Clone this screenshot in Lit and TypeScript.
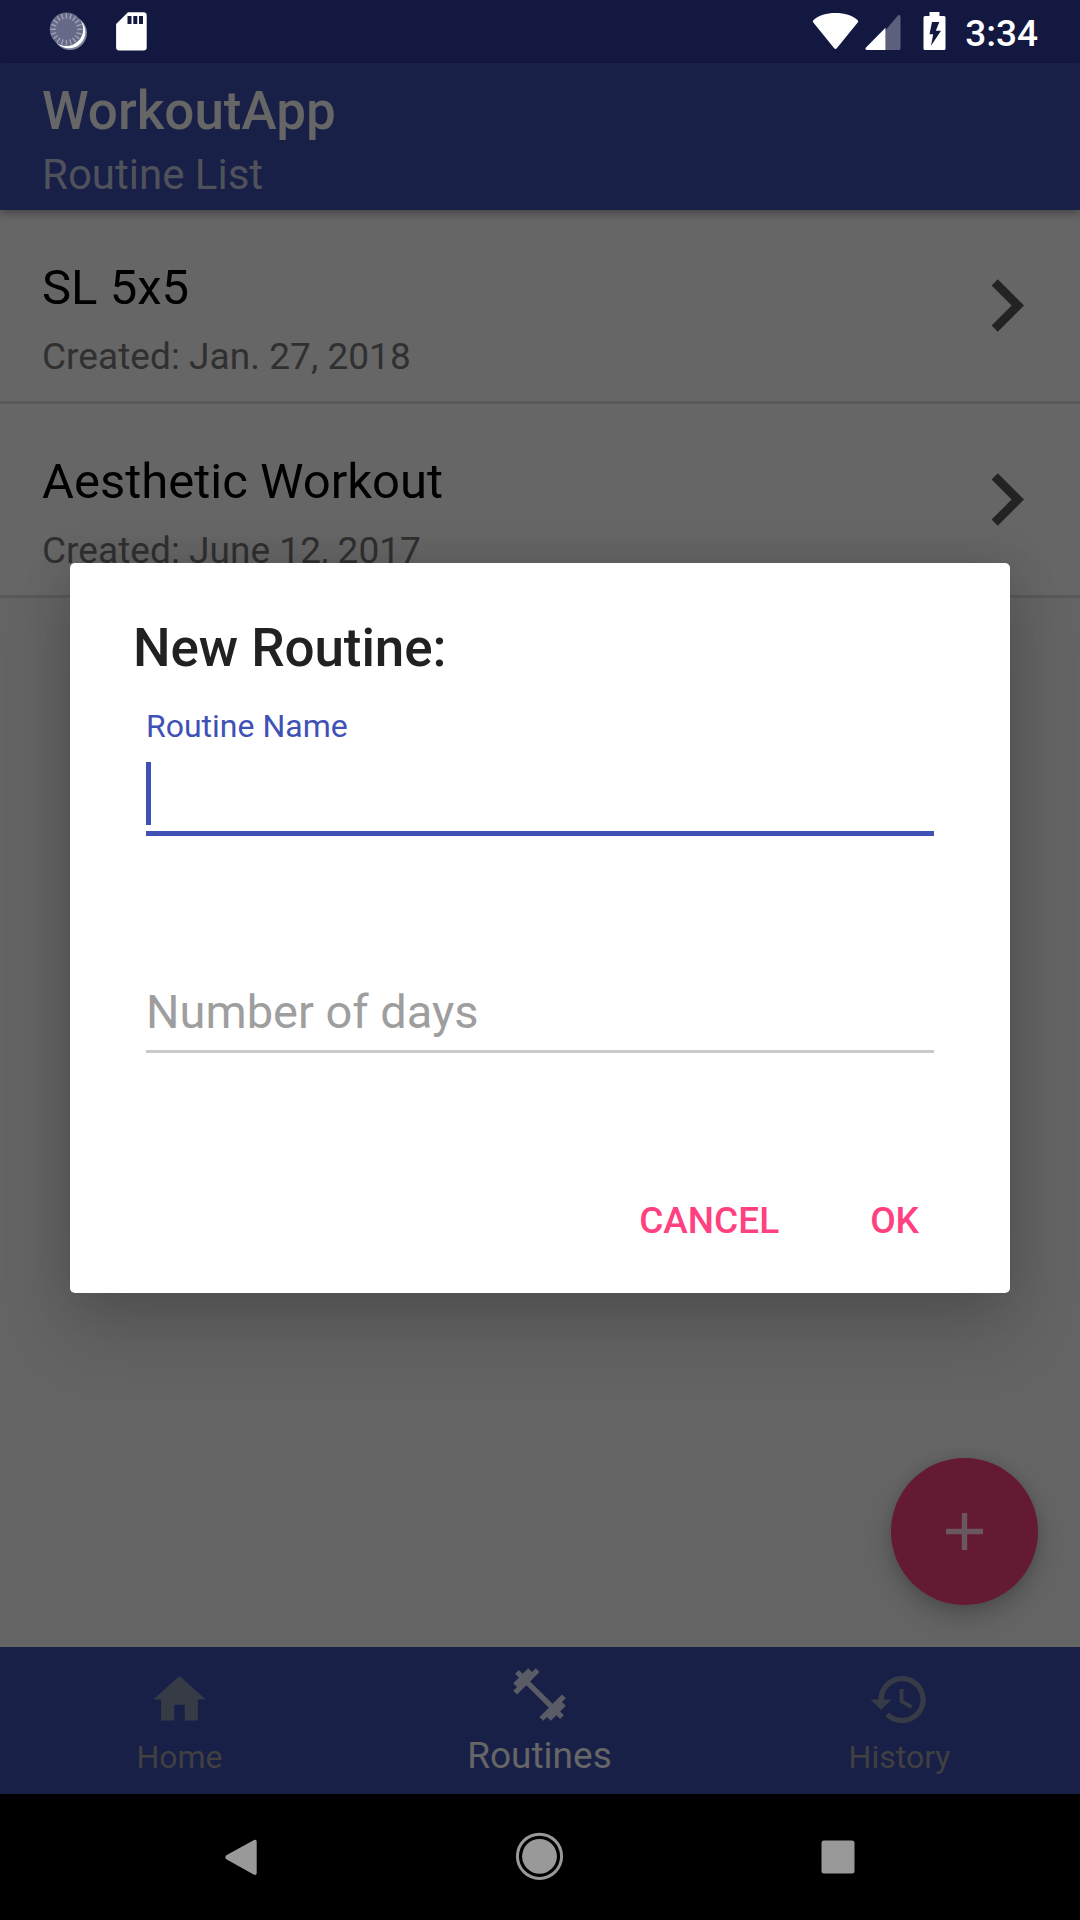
import { LitElement, html, css, svg } from "lit";
import { customElement, property } from "lit/decorators.js";

interface Routine {
  name: string;
  created: string;
}

const routines: Routine[] = [
  { name: "SL 5x5", created: "Created: Jan. 27, 2018" },
  { name: "Aesthetic Workout", created: "Created: June 12, 2017" },
];

const icons = {
  home: "M10 20v-6h4v6h5v-8h3L12 3 2 12h3v8z",
  dumbbell:
    "M20.57 14.86L22 13.43 20.57 12 17 15.57 8.43 7 12 3.43 10.57 2 9.14 3.43 7.71 2 5.57 4.14 4.14 2.71 2.71 4.14l1.43 1.43L2 7.71l1.43 1.43L2 10.57 3.43 12 7 8.43 15.57 17 12 20.57 13.43 22l1.43-1.43L16.29 22l2.14-2.14 1.43 1.43 1.43-1.43-1.43-1.43L22 16.29z",
  history:
    "M13 3c-4.97 0-9 4.03-9 9H1l3.89 3.89.07.14L9 12H6c0-3.87 3.13-7 7-7s7 3.13 7 7-3.13 7-7 7c-1.93 0-3.68-.79-4.94-2.06l-1.42 1.42C8.27 19.99 10.51 21 13 21c4.97 0 9-4.03 9-9s-4.03-9-9-9zm-1 5v5l4.28 2.54.72-1.21-3.5-2.08V8H12z",
};

@customElement("status-bar")
class StatusBar extends LitElement {
  static styles = css`
    :host {
      display: flex;
      align-items: flex-start;
      justify-content: space-between;
      height: 63px;
      background: #131840;
      color: #fff;
    }
    svg {
      display: block;
    }
    .right {
      display: flex;
      padding-right: 42px;
    }
    .time {
      font-size: 37px;
      font-weight: 500;
      line-height: 43px;
      padding-top: 12px;
    }
  `;
  render() {
    const ticks = Array.from({ length: 20 }, (_, i) => i * 18);
    return html`
      <svg width="200" height="63" viewBox="0 0 200 63">
        <circle cx="70" cy="33" r="17" fill="#7f869b" />
        <circle cx="69" cy="32" r="16.3" fill="#fff" />
        <circle cx="66.4" cy="29.3" r="16.7" fill="#666987" />
        ${ticks.map(
          (a) =>
            svg`<path d="M66.4 13.3v5.4" stroke="#a0a2b5" stroke-width="1.4" transform="rotate(${a} 66.4 29.3)" />`
        )}
        <path
          fill="#fff"
          fill-rule="evenodd"
          d="M128 12.3h15.500a3.200 3.200 0 0 1 3.200 3.200v31.700a3.200 3.200 0 0 1-3.200 3.200h-24.200a3.200 3.200 0 0 1-3.200-3.200V24zM127.500 16v8h4v-8zM133.300 16v8h4v-8zM139 16v8h4v-8z"
        />
      </svg>
      <div class="right">
        <svg width="153" height="63" viewBox="811.500 0 153 63">
          <path
            d="M812.600 22.300a1.500 1.500 0 0 1 .2-2.100C818 15.500 826 13 835 13s17 2.500 22.200 7.200a1.500 1.500 0 0 1 .2 2.100L836.300 48.300a1.700 1.700 0 0 1-2.600 0z"
            fill="#fff"
          />
          <path
            d="M885 30.200V50h13.500a1.500 1.500 0 0 0 1.500-1.500V16.500c0-1.600-1.500-2-2.600-1z"
            fill="#5d607c"
          />
          <path
            d="M885 27.700V50h-18.500c-1.700 0-2-1.500-1-2.600z"
            fill="#fff"
          />
          <path
            fill="#fff"
            fill-rule="evenodd"
            d="M929 12h10v4h4.500a1.500 1.500 0 0 1 1.500 1.500v31a1.500 1.500 0 0 1-1.500 1.500h-19a1.500 1.500 0 0 1-1.500-1.500v-31a1.500 1.500 0 0 1 1.500-1.500h4.500zM931.500 22l-2.500 12.200h3.700l-2.200 11.600 10-15h-5.200l3.500-8.800z"
          />
        </svg>
        <span class="time">3:34</span>
      </div>
    `;
  }
}

@customElement("routine-row")
class RoutineRow extends LitElement {
  @property() name = "";
  @property() created = "";
  static styles = css`
    :host {
      display: flex;
      align-items: center;
      justify-content: space-between;
      box-sizing: border-box;
      height: 194px;
      padding: 0 21px 0 42px;
      border-bottom: 3px solid #595959;
      background: #666;
    }
    .text {
      align-self: flex-start;
      padding-top: 49px;
    }
    .name {
      font-size: 49px;
      line-height: 57px;
      color: #000;
    }
    .created {
      margin-top: 19px;
      font-size: 37px;
      line-height: 43px;
      letter-spacing: 0.04px;
      color: #303030;
    }
  `;
  render() {
    return html`
      <div class="text">
        <div class="name">${this.name}</div>
        <div class="created">${this.created}</div>
      </div>
      <svg width="105" height="105" viewBox="0 0 24 24">
        <path d="M10 6L8.590 7.410 13.170 12l-4.580 4.590L10 18l6-6z" fill="#232323" />
      </svg>
    `;
  }
}

@customElement("routine-dialog")
class RoutineDialog extends LitElement {
  static styles = css`
    :host {
      display: block;
      box-sizing: border-box;
      width: 940px;
      height: 730px;
      padding: 55px 63px 0;
      border-radius: 5px;
      background: #fff;
      box-shadow: 0 40px 70px rgba(0, 0, 0, 0.15), 0 0 50px rgba(0, 0, 0, 0.14);
    }
    .title {
      font-size: 53px;
      font-weight: 500;
      line-height: 60px;
      letter-spacing: -0.08px;
      color: #212121;
    }
    .fields {
      padding: 29px 13px 0;
    }
    .label {
      font-size: 32px;
      line-height: 38px;
      color: #3f51b5;
    }
    .input {
      padding: 17px 0 6px;
      border-bottom: 5px solid #3f51b5;
    }
    .cursor {
      width: 5px;
      height: 63px;
      background: #3f51b5;
    }
    .days {
      margin-top: 148px;
      padding-bottom: 10px;
      border-bottom: 3px solid #cacaca;
      font-size: 47px;
      line-height: 56px;
      color: #9e9e9e;
    }
    .actions {
      display: flex;
      justify-content: flex-end;
      gap: 91px;
      padding: 146px 28px 0 0;
      font-size: 37px;
      font-weight: 500;
      line-height: 43px;
      color: #ff4081;
    }
  `;
  render() {
    return html`
      <div class="title">New Routine:</div>
      <div class="fields">
        <div class="label">Routine Name</div>
        <div class="input"><div class="cursor"></div></div>
        <div class="days">Number of days</div>
      </div>
      <div class="actions"><span>CANCEL</span><span>OK</span></div>
    `;
  }
}

@customElement("app-root")
class AppRoot extends LitElement {
  static styles = css`
    :host {
      display: block;
      position: relative;
      width: 1080px;
      height: 1920px;
      overflow: hidden;
      font-family: Roboto, "Liberation Sans", sans-serif;
      white-space: nowrap;
    }
    .screen {
      display: flex;
      flex-direction: column;
      height: 100%;
      background: #646464;
    }
    .app-bar {
      position: relative;
      z-index: 1;
      box-sizing: border-box;
      height: 147px;
      padding: 18px 42px 0;
      background: #192048;
      box-shadow: 0 4px 8px rgba(0, 0, 0, 0.3);
    }
    .title {
      font-size: 53px;
      font-weight: 500;
      line-height: 60px;
      color: #666;
    }
    .subtitle {
      margin-top: 9px;
      font-size: 42px;
      line-height: 49px;
      color: #4f525b;
    }
    .content {
      flex: 1;
    }
    .tabs {
      display: flex;
      height: 147px;
      background: #192048;
    }
    .tab {
      flex: 1;
      display: flex;
      flex-direction: column;
      align-items: center;
      gap: 7px;
      box-sizing: border-box;
      padding: 21px 1px 0 0;
      font-size: 32px;
      line-height: 38px;
      color: #404040;
      fill: #373b46;
    }
    .tab.active {
      gap: 8px;
      padding-top: 16px;
      font-size: 37px;
      line-height: 43px;
      color: #666;
      fill: #5a5c65;
    }
    .system-nav {
      display: block;
      height: 126px;
      background: #000;
    }
    .fab {
      position: absolute;
      left: 891px;
      top: 1458px;
      width: 147px;
      height: 147px;
      border-radius: 50%;
      background: #651a33;
      box-shadow: 0 12px 24px rgba(0, 0, 0, 0.2), 0 0 12px rgba(0, 0, 0, 0.1);
    }
    .fab svg {
      display: block;
    }
    .dialog {
      position: absolute;
      left: 70px;
      top: 563px;
    }
  `;

  private tab(label: string, path: string, active = false) {
    return html`
      <div class=${active ? "tab active" : "tab"}>
        <svg width="63" height="63" viewBox="0 0 24 24"><path d=${path} /></svg>
        <span>${label}</span>
      </div>
    `;
  }

  render() {
    return html`
      <div class="screen">
        <status-bar></status-bar>
        <div class="app-bar">
          <div class="title">WorkoutApp</div>
          <div class="subtitle">Routine List</div>
        </div>
        <div class="content">
          ${routines.map(
            (r) => html`<routine-row .name=${r.name} .created=${r.created}></routine-row>`
          )}
        </div>
        <div class="tabs">
          ${this.tab("Home", icons.home)}
          ${this.tab("Routines", icons.dumbbell, true)}
          ${this.tab("History", icons.history)}
        </div>
        <svg class="system-nav" width="1080" height="126" viewBox="0 0 1080 126">
          <g fill="#999">
            <path d="M226.300 61.200L253.600 46.200q3.100-1.500 3.100 1.600V79q0 3.100-3.100 1.600L226.300 65.200q-2-2 0-4z" />
            <circle cx="539.500" cy="62.300" r="17.400" />
            <circle cx="539.500" cy="62.300" r="22.100" fill="none" stroke="#999" stroke-width="3" />
            <rect x="821.500" y="46.500" width="33" height="33" rx="2.500" />
          </g>
        </svg>
      </div>
      <div class="fab">
        <svg width="147" height="147" viewBox="0 0 147 147">
          <path d="M70.800 55h5.400v15.800H92v5.400H76.200V92h-5.400V76.200H55v-5.400h15.800z" fill="#6a5760" />
        </svg>
      </div>
      <routine-dialog class="dialog"></routine-dialog>
    `;
  }
}
